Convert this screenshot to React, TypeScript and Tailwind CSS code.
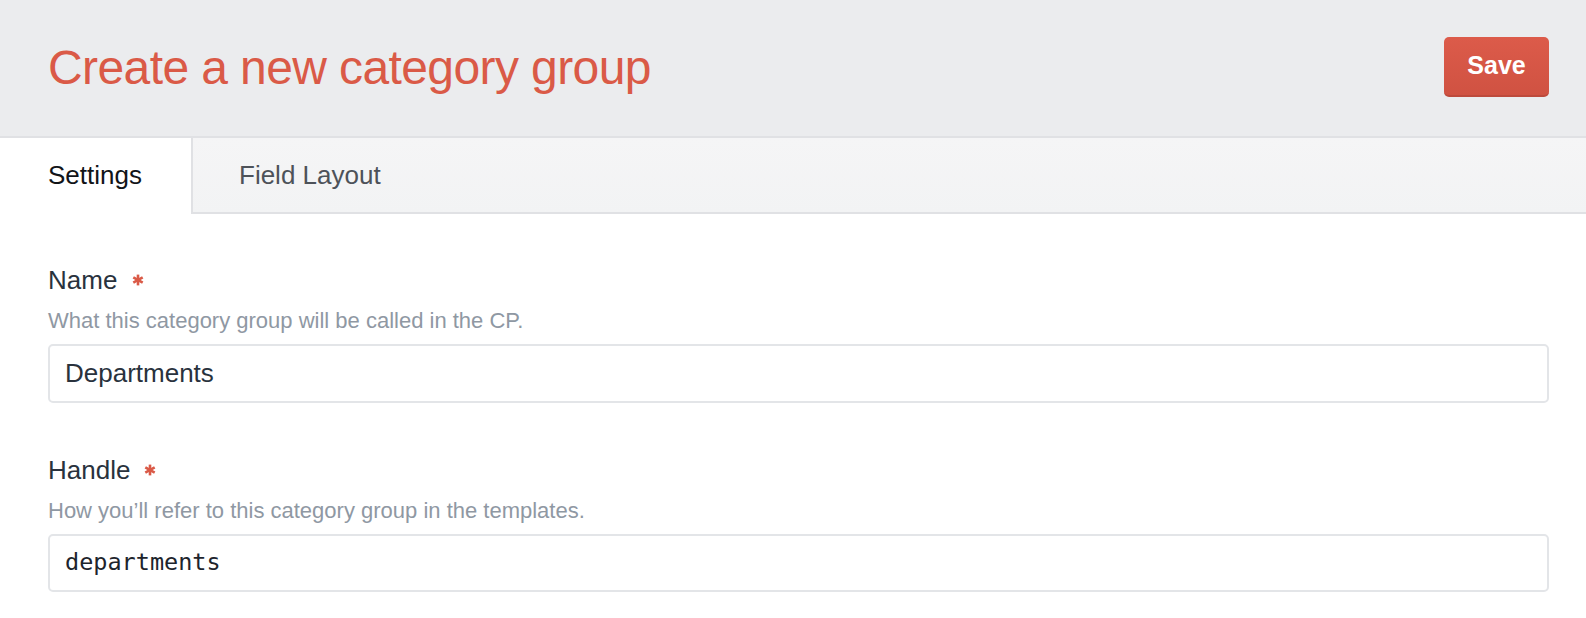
import React from "react";

function Asterisk() {
  return (
    <svg width="12" height="12" viewBox="0 0 12 12" className="shrink-0">
      <g stroke="#da5a47" strokeWidth="2.6" strokeLinecap="butt">
        <line x1="6" y1="0.6" x2="6" y2="11.4" />
        <line x1="1.3" y1="3.3" x2="10.7" y2="8.7" />
        <line x1="1.3" y1="8.7" x2="10.7" y2="3.3" />
      </g>
    </svg>
  );
}

function Field({
  label,
  instructions,
  value,
  mono,
  gapLabel,
  inputH,
}: {
  label: string;
  instructions: string;
  value: string;
  mono?: boolean;
  gapLabel: string;
  inputH: string;
}) {
  return (
    <div className="flex flex-col">
      <div className={`flex items-center h-[36px] ${gapLabel}`}>
        <span className="text-[26px] leading-[36px] text-[#29323d]">{label}</span>
        <Asterisk />
      </div>
      <div className="mt-[8px] text-[22px] leading-[30px] text-[#8f98a3]">{instructions}</div>
      <div
        className={`mt-[8px] ${inputH} flex items-center rounded-[5px] border-2 border-[#e3e5e8] bg-white px-[15px]`}
      >
        <span
          className={
            mono
              ? "font-['DejaVu_Sans_Mono',monospace] text-[23.5px] text-[#1d242c]"
              : "text-[26px] text-[#29323d]"
          }
        >
          {value}
        </span>
      </div>
    </div>
  );
}

export default function App() {
  return (
    <div className="min-h-[618px] w-full bg-white font-['Liberation_Sans',Arial,sans-serif]">
      <header className="flex h-[138px] items-center justify-between border-b-2 border-[#e0e1e4] bg-[#ebecee] pl-[48px] pr-[37px]">
        <h1 className="pb-[1px] text-[48px] leading-none tracking-[-0.6px] text-[#da5a47]">
          Create a new category group
        </h1>
        <button className="mt-[-2px] flex h-[60px] w-[105px] items-center justify-center rounded-[5px] border-b-2 border-[#bd4a3c] bg-gradient-to-b from-[#dc5b4a] to-[#d05242] text-[25px] font-bold text-white">
          Save
        </button>
      </header>
      <nav className="flex h-[76px] bg-gradient-to-b from-[#f5f5f6] to-[#f2f3f4]">
        <div className="flex w-[193px] items-center border-r-2 border-[#e0e1e4] bg-white pb-[2px] pl-[48px] text-[26px] text-[#111418]">
          Settings
        </div>
        <div className="flex flex-1 items-center border-b-2 border-[#e0e1e4] pl-[46px] text-[26px] text-[#4d5259]">
          Field Layout
        </div>
      </nav>
      <main className="flex flex-col gap-[49px] pl-[48px] pr-[37px] pt-[48px]">
        <Field
          label="Name"
          instructions="What this category group will be called in the CP."
          value="Departments"
          gapLabel="gap-[15px]"
          inputH="h-[59px]"
        />
        <Field
          label="Handle"
          instructions="How you’ll refer to this category group in the templates."
          value="departments"
          mono
          gapLabel="gap-[14px]"
          inputH="h-[58px]"
        />
      </main>
    </div>
  );
}
